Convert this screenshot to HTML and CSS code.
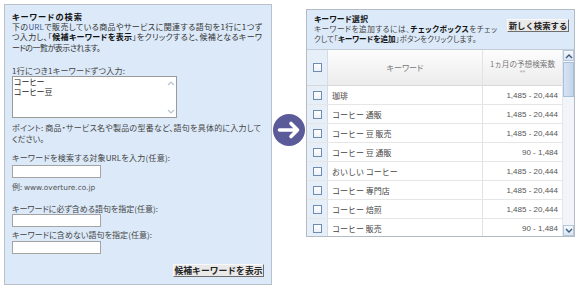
FILE: index.html
```html
<!DOCTYPE html>
<html lang="ja">
<head>
<meta charset="utf-8">
<title>キーワードの検索</title>
<link rel="stylesheet" href="styles.css">
</head>
<body>
<div class="stage">
  <section class="search-panel">
    <h2 class="title"><span class="ln w70">キーワードの検索</span></h2>
    <p class="desc">
      <span class="ln w250">下の<span class="url">URL</span>で販売している商品やサービスに関連する語句を1行に1つず</span>
      <span class="ln w250">つ入力し、「<b>候補キーワードを表示</b>」をクリックすると、候補となるキーワ</span>
      <span class="ln nat condensed">ードの一覧が表示されます。</span>
    </p>
    <div class="label first"><span class="ln w113">1行につき1キーワードずつ入力:</span></div>
    <div class="textarea">
      <div class="ta-text">コーヒー<br>コーヒー豆</div>
      <div class="ta-scroll">
        <svg width="8" height="6" viewBox="0 0 8 6"><path d="M1 5 L4 2 L7 5" fill="none" stroke="#b8c4d0" stroke-width="1.2"/></svg>
        <svg width="8" height="6" viewBox="0 0 8 6"><path d="M1 1 L4 4 L7 1" fill="none" stroke="#b8c4d0" stroke-width="1.2"/></svg>
      </div>
    </div>
    <p class="hint">
      <span class="ln w249">ポイント: 商品・サービス名や製品の型番など、語句を具体的に入力して</span>
      <span class="ln nat">ください。</span>
    </p>
    <div class="label url-label"><span class="ln w158">キーワードを検索する対象URLを入力(任意):</span></div>
    <div class="input"></div>
    <div class="example">例: <span class="example-url">www.overture.co.jp</span></div>
    <div class="label must-label"><span class="ln w145">キーワードに必ず含める語句を指定(任意):</span></div>
    <div class="input tight"></div>
    <div class="label not-label"><span class="ln w140">キーワードに含めない語句を指定(任意):</span></div>
    <div class="input tight2"></div>
    <div class="actions"><span class="btn">候補キーワードを表示</span></div>
  </section>

  <div class="arrow">
    <svg width="32" height="32" viewBox="0 0 32 32">
      <circle cx="16" cy="16" r="16" fill="#5c5b9a"/>
      <path d="M6.5 16 H24.5 M18 9.5 L24.5 16 L18 22.5" fill="none" stroke="#fff" stroke-width="3.6" stroke-linecap="round" stroke-linejoin="round"/>
    </svg>
  </div>

  <section class="result-panel">
    <div class="result-head">
      <p class="result-text">
        <b class="ln rt-title w54">キーワード選択</b>
        <span class="ln w183">キーワードを追加するには、<b>チェックボックス</b>をチェッ</span>
        <span class="ln w156">クして「<b>キーワードを追加</b>」ボタンをクリックします。</span>
      </p>
      <span class="btn new-search">新しく検索する</span>
    </div>
    <div class="table-wrap">
      <div class="table">
        <div class="row head">
          <div class="cell cb"><span class="box"></span></div>
          <div class="cell kw kw-head">キーワード</div>
          <div class="cell num num-head"><span>1ヵ月の予想検索数</span><span class="stars">**</span></div>
        </div>
        <div class="row"><div class="cell cb"><span class="box"></span></div><div class="cell kw">珈琲</div><div class="cell num">1,485 - 20,444</div></div>
        <div class="row"><div class="cell cb"><span class="box"></span></div><div class="cell kw">コーヒー 通販</div><div class="cell num">1,485 - 20,444</div></div>
        <div class="row"><div class="cell cb"><span class="box"></span></div><div class="cell kw">コーヒー 豆 販売</div><div class="cell num">1,485 - 20,444</div></div>
        <div class="row"><div class="cell cb"><span class="box"></span></div><div class="cell kw">コーヒー 豆 通販</div><div class="cell num">90 - 1,484</div></div>
        <div class="row"><div class="cell cb"><span class="box"></span></div><div class="cell kw">おいしい コーヒー</div><div class="cell num">1,485 - 20,444</div></div>
        <div class="row"><div class="cell cb"><span class="box"></span></div><div class="cell kw">コーヒー 専門店</div><div class="cell num">1,485 - 20,444</div></div>
        <div class="row"><div class="cell cb"><span class="box"></span></div><div class="cell kw">コーヒー 焙煎</div><div class="cell num">1,485 - 20,444</div></div>
        <div class="row"><div class="cell cb"><span class="box"></span></div><div class="cell kw">コーヒー 販売</div><div class="cell num">90 - 1,484</div></div>
      </div>
      <div class="scrollbar">
        <div class="sb-btn">
          <svg width="8" height="6" viewBox="0 0 8 6"><path d="M1 5 L4 2 L7 5" fill="none" stroke="#3d5a80" stroke-width="1.4"/></svg>
        </div>
        <div class="sb-thumb"></div>
        <div class="sb-track"></div>
        <div class="sb-btn">
          <svg width="8" height="6" viewBox="0 0 8 6"><path d="M1 1 L4 4 L7 1" fill="none" stroke="#3d5a80" stroke-width="1.4"/></svg>
        </div>
      </div>
    </div>
  </section>
</div>
</body>
</html>
```

FILE: styles.css
```css
html, body {
  margin: 0;
  padding: 0;
  background: #ffffff;
}

body {
  font-family: "Noto Sans CJK JP", "Liberation Sans", sans-serif;
  font-size: 8px;
  color: #333;
  font-feature-settings: "palt";
}

.stage {
  display: flex;
  align-items: flex-start;
  padding: 4px 0 0 4px;
}

/* single lines, stretched to the widths of the reference */
.ln {
  display: block;
  text-align: justify;
  text-align-last: justify;
  white-space: nowrap;
}

.ln.nat {
  text-align: left;
  text-align-last: left;
}

.condensed {
  letter-spacing: -0.5px;
}

.w54 { width: 54px; }
.w70 { width: 70px; }
.w113 { width: 113px; }
.w140 { width: 140px; }
.w145 { width: 145px; }
.w156 { width: 156px; }
.w158 { width: 158px; }
.w183 { width: 183px; }
.w249 { width: 249px; }
.w250 { width: 250px; }

/* ---------- left panel ---------- */
.search-panel {
  box-sizing: border-box;
  width: 268px;
  height: 281px;
  background: #dbe9f8;
  border: 1px solid #b9c0c8;
  padding: 6px 7px 0 7px;
  white-space: nowrap;
}

.title {
  margin: 0;
  font-size: 8.2px;
  line-height: 10.6px;
  font-weight: bold;
  color: #111;
}

.desc {
  margin: 0;
  line-height: 10.6px;
  color: #333;
}

.desc b {
  color: #111;
}

.url {
  color: #3b5c94;
}

.label {
  line-height: 10px;
  color: #444;
}

.label.first {
  margin-top: 12.6px;
}

.textarea {
  box-sizing: border-box;
  width: 165px;
  height: 42px;
  margin-top: 0.5px;
  background: #fff;
  border: 1px solid #9a9a9a;
  display: flex;
}

.ta-text {
  flex: 1;
  padding: 0 0 0 1px;
  line-height: 10px;
  color: #222;
}

.ta-scroll {
  width: 11px;
  display: flex;
  flex-direction: column;
  justify-content: space-between;
  align-items: center;
  padding: 3px 0 2px;
}

.hint {
  margin: 4.8px 0 0;
  line-height: 10.4px;
  color: #444;
}

.url-label {
  margin-top: 9px;
}

.input {
  box-sizing: border-box;
  width: 89px;
  height: 13px;
  margin-top: 2px;
  background: #fff;
  border: 1px solid #a4a4a4;
}

.example {
  margin-top: 3.7px;
  line-height: 10px;
  color: #555;
}

.example-url {
  font-family: "DejaVu Sans", Verdana, sans-serif;
  font-size: 7.4px;
}

.must-label {
  margin-top: 11px;
}

.input.tight {
  margin-top: 0;
}

.not-label {
  margin-top: 3px;
}

.input.tight2 {
  margin-top: 1px;
}

.actions {
  display: flex;
  justify-content: flex-end;
  margin-top: 10px;
}

.btn {
  box-sizing: border-box;
  display: inline-block;
  height: 13px;
  line-height: 11px;
  padding: 0;
  background: #e9e9e9;
  border: 1px solid;
  border-color: #f8f8f8 #6e6e6e #6e6e6e #f8f8f8;
  font-weight: bold;
  font-size: 8.8px;
  color: #222;
  text-align: center;
  white-space: nowrap;
  font-feature-settings: normal;
}

.actions .btn {
  width: 91px;
}

/* ---------- arrow ---------- */
.arrow {
  width: 32px;
  height: 32px;
  margin: 110px 0 0 1px;
  line-height: 0;
}

/* ---------- right panel ---------- */
.result-panel {
  box-sizing: border-box;
  width: 269px;
  height: 228px;
  margin: 5px 0 0 1px;
  border: 1px solid #b3bbc4;
  overflow: hidden;
  background: #fff;
}

.result-head {
  display: flex;
  justify-content: space-between;
  align-items: flex-start;
  height: 40px;
  padding: 4px 5px 0 7px;
  box-sizing: border-box;
  background: #dbe9f8;
  border-bottom: 1px solid #c3ccd6;
  white-space: nowrap;
}

.result-text {
  margin: 0;
  line-height: 10px;
  font-size: 7.6px;
  color: #444;
}

.result-text b {
  color: #111;
}

.rt-title {
  font-size: 7.8px;
}

.new-search {
  width: 62px;
  margin-top: 5px;
  font-size: 8.4px;
}

.table-wrap {
  display: flex;
}

.table {
  width: 255px;
}

.row {
  display: flex;
  height: 19px;
  border-bottom: 1px solid #e6e6e6;
  box-sizing: border-box;
}

.row.head {
  height: 36px;
  background: linear-gradient(#fdfdfd, #ececec);
  border-bottom: 1px solid #d8d8d8;
}

.cell {
  display: flex;
  align-items: center;
  box-sizing: border-box;
}

.cb {
  width: 21px;
  justify-content: center;
  background: #e6eef7;
  border-right: 1px solid #d4dde7;
}

.box {
  box-sizing: border-box;
  width: 9px;
  height: 9px;
  border: 1px solid #6f8db2;
  background: linear-gradient(#ffffff, #edf1f6);
}

.kw {
  width: 155px;
  padding-left: 4px;
  border-right: 1px solid #e2e2e2;
  color: #444;
  white-space: nowrap;
  font-feature-settings: normal;
}

.kw-head {
  justify-content: center;
  padding-left: 0;
  color: #777;
  font-size: 8px;
  font-feature-settings: "palt";
}

.num {
  width: 79px;
  justify-content: flex-end;
  padding-right: 4px;
  font-family: "Liberation Sans", Arial, sans-serif;
  font-size: 8px;
  color: #555;
}

.num-head {
  flex-direction: column;
  justify-content: center;
  align-items: center;
  padding-right: 0;
  line-height: 10px;
  font-family: "Noto Sans CJK JP", sans-serif;
  font-size: 7.6px;
  color: #777;
  text-align: center;
  white-space: nowrap;
  font-feature-settings: normal;
}

.stars {
  color: #aaa;
  font-family: "Liberation Sans", sans-serif;
  font-size: 7px;
  line-height: 8px;
}

.scrollbar {
  width: 12px;
  display: flex;
  flex-direction: column;
  height: 186px;
  background: #f1f4f8;
  border-left: 1px solid #e2e7ee;
  box-sizing: border-box;
}

.sb-btn {
  height: 11px;
  display: flex;
  align-items: center;
  justify-content: center;
  background: linear-gradient(#f6f9fd, #d8e4f2);
  border: 1px solid #b5c7dc;
  box-sizing: border-box;
}

.sb-thumb {
  height: 35px;
  margin-top: 1px;
  background: linear-gradient(90deg, #d6e3f3, #c2d5ec);
  border: 1px solid #a9c0dc;
  box-sizing: border-box;
}

.sb-track {
  flex: 1;
}
```
